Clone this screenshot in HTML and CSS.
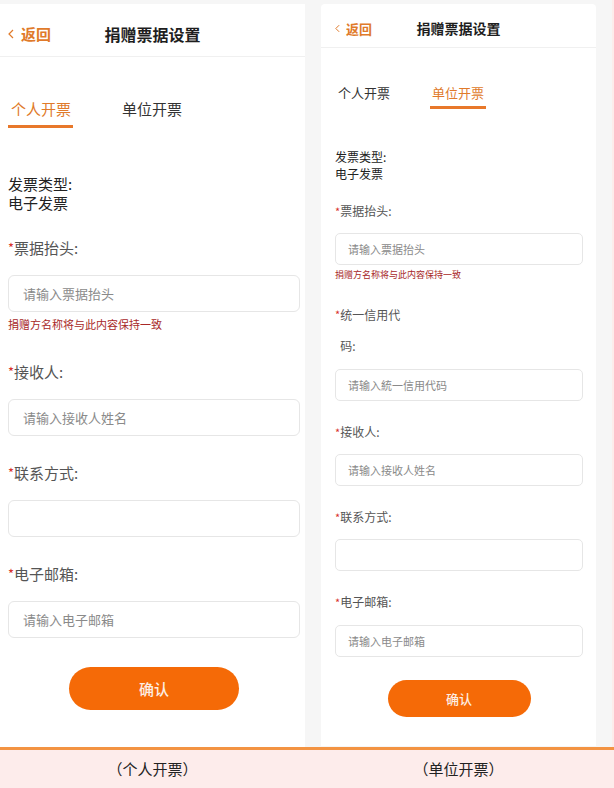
FILE: index.html
```html
<!DOCTYPE html>
<html lang="zh-CN">
<head>
  <meta charset="utf-8">
  <title>捐赠票据设置</title>
  <link rel="stylesheet" href="styles.css">
</head>
<body>
  <div class="screens">

    <!-- 个人开票 -->
    <section class="phone phone-a">
      <header class="bar">
        <a class="back"><svg viewBox="0 0 6 10"><polyline points="5,1 1,5 5,9"/></svg>返回</a>
        <h1>捐赠票据设置</h1>
        <span></span>
      </header>
      <nav class="tabs">
        <span class="tab on">个人开票</span>
        <span class="tab">单位开票</span>
      </nav>
      <p class="type">发票类型:<br>电子发票</p>

      <div class="field f1">
        <label><i>*</i><span>票据抬头:</span></label>
        <div class="input">请输入票据抬头</div>
        <p class="note">捐赠方名称将与此内容保持一致</p>
      </div>
      <div class="field f2">
        <label><i>*</i><span>接收人:</span></label>
        <div class="input">请输入接收人姓名</div>
      </div>
      <div class="field f3">
        <label><i>*</i><span>联系方式:</span></label>
        <div class="input"></div>
      </div>
      <div class="field f4">
        <label><i>*</i><span>电子邮箱:</span></label>
        <div class="input">请输入电子邮箱</div>
      </div>
      <button class="ok">确认</button>
    </section>

    <!-- 单位开票 -->
    <section class="phone phone-b">
      <header class="bar">
        <a class="back"><svg viewBox="0 0 6 10"><polyline points="5,1 1,5 5,9"/></svg>返回</a>
        <h1>捐赠票据设置</h1>
        <span></span>
      </header>
      <nav class="tabs">
        <span class="tab">个人开票</span>
        <span class="tab on">单位开票</span>
      </nav>
      <p class="type">发票类型:<br>电子发票</p>

      <div class="field f1">
        <label><i>*</i><span>票据抬头:</span></label>
        <div class="input">请输入票据抬头</div>
        <p class="note">捐赠方名称将与此内容保持一致</p>
      </div>
      <div class="field f2 tall">
        <label><i>*</i><span>统一信用代码:</span></label>
        <div class="input">请输入統一信用代码</div>
      </div>
      <div class="field f3">
        <label><i>*</i><span>接收人:</span></label>
        <div class="input">请输入接收人姓名</div>
      </div>
      <div class="field f4">
        <label><i>*</i><span>联系方式:</span></label>
        <div class="input"></div>
      </div>
      <div class="field f5">
        <label><i>*</i><span>电子邮箱:</span></label>
        <div class="input">请输入电子邮箱</div>
      </div>
      <button class="ok">确认</button>
    </section>
  </div>

  <div class="captions">
    <span class="cap-a">（个人开票）</span>
    <span class="cap-b">（单位开票）</span>
  </div>
</body>
</html>
```

FILE: styles.css
```css
html, body { margin:0; padding:0; }
body
{
  width:614px; height:788px; overflow:hidden;
  background:#fdeceb;
  font-family:"Noto Sans CJK SC", "Liberation Sans", sans-serif;
  color:#222;
}

.screens
{
  display:flex; gap:16px; align-items:flex-start;
  width:612px; height:747px; box-sizing:border-box;
  padding-top:4px;
  background:#f6f6f6;
}

.phone { background:#fff; box-sizing:border-box; display:flex; flex-direction:column; }
.phone p { margin:0; }

.bar { display:grid; grid-template-columns:1fr auto 1fr; align-items:center; border-bottom:1px solid #f0f0f0; box-sizing:border-box; }
.bar h1 { margin:0; font-weight:700; color:#1e1e1e; }
.back { display:flex; align-items:center; color:#e07a2a; font-weight:700; }
.back svg { fill:none; stroke:#e07a2a; stroke-width:1.2; }

.tabs { display:flex; }
.tab { border-bottom:3px solid transparent; color:#333; }
.tab.on { color:#e07a2a; border-bottom-color:#e8782a; }

label { display:flex; color:#555; }
label i { font-style:normal; color:#d8312c; }

.input { box-sizing:border-box; border:1px solid #e6e6e6; color:#8a8a8a; display:flex; align-items:center; }
.note { color:#a82828; }

.ok
{
  align-self:center; border:none; border-radius:999px;
  background:#f56a07; color:#fdeee4;
  font-family:inherit; font-weight:500; padding:0;
}

/* ---------- left: 个人开票 ---------- */
.phone-a { width:305px; height:743px; padding:0 5px 0 8px; }
.phone-a .bar { height:53px; margin:0 -5px 0 -8px; padding:7px 8px 0; }
.phone-a .bar h1 { font-size:16px; line-height:22px; }
.phone-a .back { font-size:15px; }
.phone-a .back svg { width:6px; height:10px; margin-right:7px; }

.phone-a .tabs { margin-top:42px; gap:46px; font-size:15px; line-height:20px; }
.phone-a .tab { padding:0 2px 6px 3px; }

.phone-a .type { margin-top:46px; font-size:15px; line-height:19px; }

.phone-a label { font-size:15px; line-height:20px; }
.phone-a label i { font-size:13px; }
.phone-a .input { height:37px; margin-top:17px; border-radius:6px; padding-left:14px; font-size:13px; }
.phone-a .note { margin-top:4px; font-size:11px; line-height:16px; }
.phone-a .f1 { margin-top:26px; }
.phone-a .f2 { margin-top:30px; }
.phone-a .f3, .phone-a .f4 { margin-top:27px; }
.phone-a .ok { margin-top:29px; width:170px; height:43px; font-size:15px; }

/* ---------- right: 单位开票 ---------- */
.phone-b { width:275px; height:742px; padding:0 13px 0 14px; border-radius:4px 4px 0 0; }
.phone-b .bar { height:44px; margin:0 -13px 0 -14px; padding:5px 14px 0; }
.phone-b .bar h1 { font-size:14px; line-height:20px; }
.phone-b .back { font-size:13px; }
.phone-b .back svg { width:5px; height:9px; margin-right:6px; }

.phone-b .tabs { margin-top:36px; gap:38px; font-size:13px; line-height:18px; }
.phone-b .tab { padding:0 2px 4px; }
.phone-b .tab:first-child { padding-left:3px; }

.phone-b .type { margin-top:39px; font-size:12px; line-height:17px; }

.phone-b label { font-size:12px; line-height:18px; }
.phone-b label i { font-size:11px; }
.phone-b label span { max-width:64px; }
.phone-b .tall label { line-height:31px; }
.phone-b .input { height:32px; margin-top:13px; border-radius:5px; padding-left:12px; font-size:11px; }
.phone-b .tall .input { margin-top:8px; }
.phone-b .note { margin-top:4px; font-size:9px; line-height:12px; }
.phone-b .f1 { margin-top:20px; }
.phone-b .f2 { margin-top:18px; }
.phone-b .f3, .phone-b .f4, .phone-b .f5 { margin-top:22px; }
.phone-b .f5 .input { margin-top:14px; }
.phone-b .ok { margin-top:23px; width:143px; height:37px; font-size:13px; }

/* ---------- captions ---------- */
.captions
{
  display:flex; gap:16px;
  height:41px; box-sizing:border-box;
  border-top:3px solid #f39342;
  font-size:15px; line-height:38px; color:#222;
}
.captions span { text-align:center; }
.cap-a { width:305px; }
.cap-b { width:275px; }
```
